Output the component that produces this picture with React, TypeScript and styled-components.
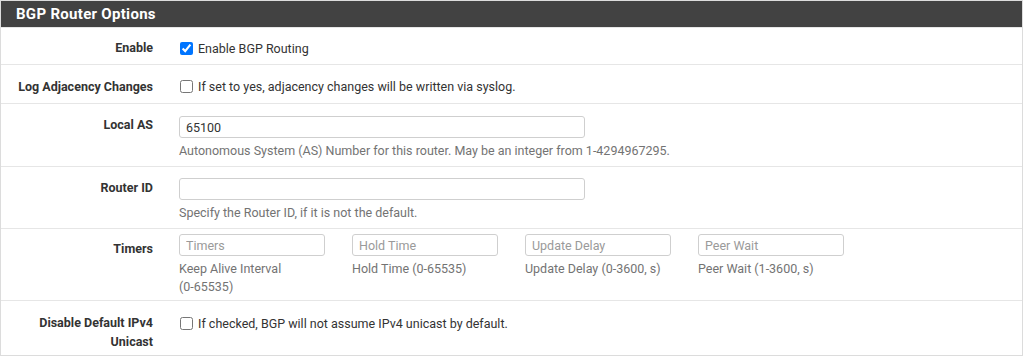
import React from "react";
import styled, { createGlobalStyle } from "styled-components";

const Global = createGlobalStyle`
  html, body { margin: 0; padding: 0; background: #fff; }
  body { font-family: Roboto, "Liberation Sans", sans-serif; font-size: 12.5px; color: #212529; }
  * { box-sizing: border-box; }
`;

const Panel = styled.div`
  width: 1023px;
  border: 1px solid #dcdcdc;
  background: #fff;
`;

const Header = styled.div`
  height: 26px;
  background: #424242;
  color: #fff;
  font-weight: 700;
  font-size: 15px;
  letter-spacing: 0.3px;
  padding-left: 15px;
  display: flex;
  align-items: center;
`;

const Row = styled.div<{ $pt: number; $pb: number }>`
  display: grid;
  grid-template-columns: 164px 1fr;
  padding: ${(p) => p.$pt}px 0 ${(p) => p.$pb}px;
  border-top: 1px solid #e6e6e6;
  &:first-of-type { border-top: none; }
`;

const Label = styled.div<{ $mt: number }>`
  text-align: right;
  font-weight: 700;
  color: #333;
  padding-right: 12px;
  line-height: 19px;
  margin-top: ${(p) => p.$mt}px;
`;

const Content = styled.div`
  padding-left: 14px;
  display: flex;
  flex-direction: column;
`;

const CheckLine = styled.label`
  display: flex;
  align-items: center;
  gap: 5px;
  color: #333;
  line-height: 19px;
  margin-top: 1px;
  input { margin: 0 0 0 1px; width: 13px; height: 13px; }
`;

const TextInput = styled.input<{ $w: number }>`
  width: ${(p) => p.$w}px;
  height: 22px;
  border: 1px solid #cfcfcf;
  border-radius: 3px;
  padding: 0 6px;
  font-family: Roboto, "Liberation Sans", sans-serif;
  font-size: 12.5px;
  color: #333;
  outline: none;
  &::placeholder { color: #9a9a9a; }
`;

const Help = styled.div`
  color: #737373;
  line-height: 18px;
  margin-top: 4px;
`;

const NoWrap = styled.span`
  white-space: nowrap;
`;

const TimerGrid = styled.div`
  display: grid;
  grid-template-columns: repeat(4, 146px);
  column-gap: 27px;
`;

const TimerCol = styled.div`
  display: flex;
  flex-direction: column;
`;

const timers = [
  { ph: "Timers", help: "Keep Alive Interval", range: "(0-65535)" },
  { ph: "Hold Time", help: "Hold Time", range: "(0-65535)" },
  { ph: "Update Delay", help: "Update Delay", range: "(0-3600, s)" },
  { ph: "Peer Wait", help: "Peer Wait", range: "(1-3600, s)" },
];

export default function App() {
  return (
    <>
      <Global />
      <Panel>
        <Header>BGP Router Options</Header>
        <Row $pt={10} $pb={6}>
          <Label $mt={0}>Enable</Label>
          <Content>
            <CheckLine>
              <input type="checkbox" defaultChecked />
              Enable BGP Routing
            </CheckLine>
          </Content>
        </Row>
        <Row $pt={11} $pb={7}>
          <Label $mt={1}>Log Adjacency Changes</Label>
          <Content>
            <CheckLine>
              <input type="checkbox" />
              If set to yes, adjacency changes will be written via syslog.
            </CheckLine>
          </Content>
        </Row>
        <Row $pt={12} $pb={6}>
          <Label $mt={-1}>Local AS</Label>
          <Content>
            <TextInput $w={406} defaultValue="65100" />
            <Help>Autonomous System (AS) Number for this router. May be an integer from 1-4294967295.</Help>
          </Content>
        </Row>
        <Row $pt={11} $pb={6}>
          <Label $mt={0}>Router ID</Label>
          <Content>
            <TextInput $w={406} />
            <Help>Specify the Router ID, if it is not the default.</Help>
          </Content>
        </Row>
        <Row $pt={5} $pb={4}>
          <Label $mt={5}>Timers</Label>
          <Content>
            <TimerGrid>
              {timers.map((t) => (
                <TimerCol key={t.ph}>
                  <TextInput $w={146} placeholder={t.ph} />
                  <Help>
                    {t.help} <NoWrap>{t.range}</NoWrap>
                  </Help>
                </TimerCol>
              ))}
            </TimerGrid>
          </Content>
        </Row>
        <Row $pt={12} $pb={4}>
          <Label $mt={0}>Disable Default IPv4 Unicast</Label>
          <Content>
            <CheckLine>
              <input type="checkbox" />
              If checked, BGP will not assume IPv4 unicast by default.
            </CheckLine>
          </Content>
        </Row>
      </Panel>
    </>
  );
}
